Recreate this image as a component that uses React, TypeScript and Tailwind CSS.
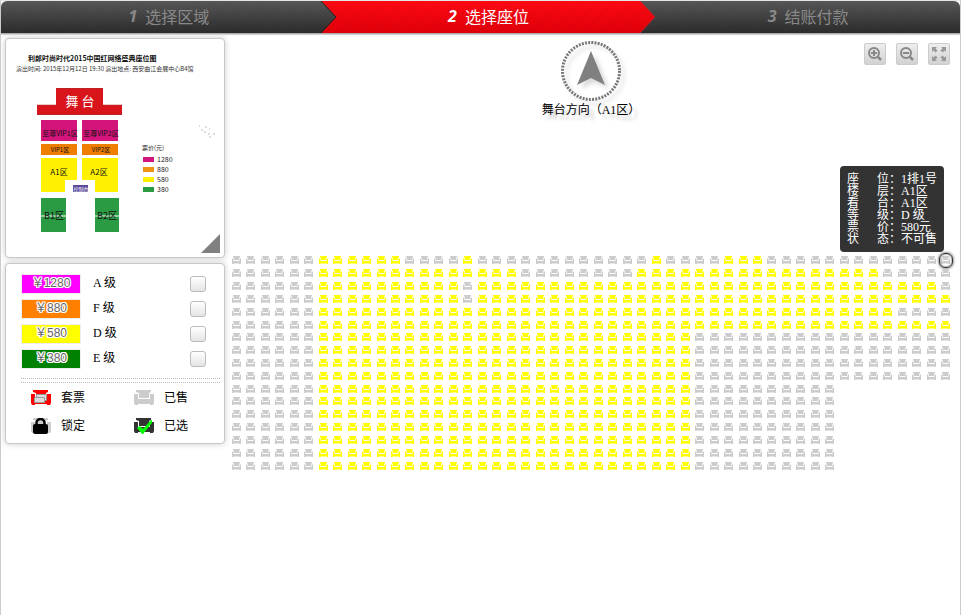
import React from "react";

const TOTAL_COLUMNS = 50;

interface RowInfo {
  seats: number;
  open: [number, number][];
}

// Ranges of column indexes that are still for sale, both ends included
const upperRows: RowInfo[] = [
  { seats: 50, open: [[6, 11], [16, 16], [29, 29], [34, 36]] },
  { seats: 50, open: [[6, 19], [28, 44]] },
  { seats: 50, open: [[6, 15], [17, 48]] },
  { seats: 50, open: [[6, 15], [17, 49]] },
  { seats: 50, open: [[6, 45]] },
  { seats: 50, open: [[6, 49]] },
];

const rows: RowInfo[] = [
  ...upperRows,
  ...Array.from({ length: 4 }, (): RowInfo => ({ seats: 50, open: [[6, 31]] })),
  ...Array.from({ length: 7 }, (): RowInfo => ({ seats: 42, open: [[6, 31]] })),
];

const prices = [
  { price: "￥1280", level: "A 级", color: "bg-[#ff00ff]" },
  { price: "￥880", level: "F 级", color: "bg-[#ff8000]" },
  { price: "￥580", level: "D 级", color: "bg-[#ffff00]" },
  { price: "￥380", level: "E 级", color: "bg-[#008000]" },
];

const seatInfo = [
  ["座", "位：", "1排1号"],
  ["楼", "层：", "A1区"],
  ["看", "台：", "A1区"],
  ["等", "级：", "D 级"],
  ["票", "价：", "580元"],
  ["状", "态：", "不可售"],
];

const CHAIR = "M2 0h15v2l-2 1v5H5V3L2 2zM0 4h4v5h12V4h4v9l-1 2h-3v-1H4v1H1l-1-2z";

interface StepProps {
  number: number;
  title: string;
  active?: boolean;
  arrow?: "dark" | "red";
}

const Step: React.FC<StepProps> = ({ number, title, active, arrow }) => (
  <li
    aria-current={active ? "step" : undefined}
    className={`relative flex flex-1 items-center justify-center gap-2 pb-0.5 pl-4 ${
      active
        ? "bg-linear-to-b from-[#ff0a12] to-[#e2000a] text-white"
        : "bg-linear-to-b from-[#585858] to-[#2c2c2c] text-[#8b8b8b]"
    }`}
  >
    <span className="font-['Open_Sans',sans-serif] text-base font-bold italic">{number}</span>
    <span className="text-base">{title}</span>
    {arrow && (
      <svg className="absolute top-0 left-full z-10 h-full w-4" viewBox="0 0 16 32" preserveAspectRatio="none">
        <defs>
          <linearGradient id={`arrow-${arrow}`} x1="0" y1="0" x2="0" y2="1">
            <stop offset="0" stopColor={arrow === "red" ? "#ff0a12" : "#585858"} />
            <stop offset="1" stopColor={arrow === "red" ? "#e2000a" : "#2c2c2c"} />
          </linearGradient>
        </defs>
        <path d="M-1 0H0L15 16 0 32h-1z" fill={`url(#arrow-${arrow})`} />
        <path d="M0 0L15 16 0 32" fill="none" stroke={arrow === "red" ? "#b9272b" : "#222"} strokeWidth="1" />
      </svg>
    )}
  </li>
);

const VenueMap: React.FC = () => (
  <svg viewBox="0 0 218 218" className="block w-full" role="img" aria-label="座位图" fontFamily="'Noto Sans CJK SC', sans-serif">
    <text x="22" y="22" fontSize="7" fontWeight="bold" fill="#111">利郎时尚时代2015中国红网络盛典座位图</text>
    <text x="10" y="32" fontSize="6" fill="#333">演出时间: 2015年12月12日 19:30 演出地点: 西安曲江会展中心B4馆</text>

    <path d="M50 49h47v17h19v10H31V66h19z" fill="#d7151a" />
    <path d="M31 66h19M97 66h19M50 49.500h47M31 75.500h85" stroke="#a83030" strokeWidth="1" opacity=".5" />
    <text x="74" y="67" fontSize="13" fill="#fff" textAnchor="middle">舞 台</text>

    <path d="M35 81h36v21H35zM76 81h36v21H76z" fill="#d3147a" />
    <path d="M35 105h36v11H35zM76 105h36v11H76z" fill="#ef7d00" />
    <path d="M35 119h36v22H59v12H35zM76 119h36v34H89v-12H76z" fill="#fff100" />
    <path d="M67 146h15v7H67z" fill="#5b4a9a" />
    <path d="M35 159h25v34H35zM89 159h24v34H89z" fill="#2a9a43" />
    <path d="M35 177h25M89 177h24" stroke="#fff" strokeWidth="1" />

    <g fill="#111" textAnchor="middle">
      <text x="54" y="97" fontSize="7">至尊VIP1区</text>
      <text x="95" y="97" fontSize="7">至尊VIP2区</text>
      <text x="54" y="113" fontSize="6">VIP1区</text>
      <text x="95" y="113" fontSize="6">VIP2区</text>
      <text x="53" y="136" fontSize="8">A1区</text>
      <text x="93" y="136" fontSize="8">A2区</text>
      <text x="48" y="180" fontSize="9">B1区</text>
      <text x="101" y="180" fontSize="9">B2区</text>
    </g>
    <text x="75" y="152" fontSize="5" fill="#fff" textAnchor="middle">控制台</text>

    <path d="M137 118h11v5h-11z" fill="#d3147a" />
    <path d="M137 128h11v5h-11z" fill="#ee9412" />
    <path d="M137 138h11v5h-11z" fill="#fff100" />
    <path d="M137 148h11v5h-11z" fill="#2a9a43" />
    <g fill="#222" fontSize="7">
      <text x="136" y="111" fontSize="6">票价(元)</text>
      <text x="151" y="123">1280</text>
      <text x="151" y="133">880</text>
      <text x="151" y="143">580</text>
      <text x="151" y="153">380</text>
    </g>

    <path d="M193 87h1M195 91h2M199 88h2M203 90h1M198 93h2M202 95h2M207 95h2M203 98h2" stroke="#bbb" strokeWidth="1" />
    <path d="M214 195v19h-19z" fill="#808080" />
  </svg>
);

interface SeatProps {
  open: boolean;
  label: string;
  current?: boolean;
}

const Seat: React.FC<SeatProps> = ({ open, label, current }) => (
  <button
    type="button"
    aria-label={label}
    className={`relative flex items-center justify-center ${open ? "text-[#ffff00]" : "text-[#cccccc]"}`}
  >
    {current && (
      <span className="absolute -inset-y-px inset-x-0 rounded-md border border-[#333] shadow-[0_0_3px_#333,inset_0_0_2px_#333]" />
    )}
    <svg viewBox="0 0 9 8" className="h-2 w-[9px] shrink-0" fill="currentColor">
      <path d="M1 0h7v1.500H7V4H2V1.500H1zM0 2.500h1.500v2.500h6V2.500H9V8H7.500V7.500h-6V8H0z" />
    </svg>
  </button>
);

const SeatTooltip: React.FC = () => (
  <dl
    role="tooltip"
    className="absolute right-[9px] bottom-full mb-0.5 w-[104px] rounded-sm bg-[#333] px-[7px] py-[7px] text-xs leading-3 text-white"
  >
    {seatInfo.map(([first, second, value]) => (
      <div key={first} className="flex whitespace-nowrap">
        <dt className="flex w-[54px] shrink-0 justify-between">
          <span>{first}</span>
          <span>{second}</span>
        </dt>
        <dd>{value}</dd>
      </div>
    ))}
  </dl>
);

const ToolButton: React.FC<{ label: string; children: React.ReactNode }> = ({ label, children }) => (
  <button
    type="button"
    aria-label={label}
    className="flex size-[22px] items-center justify-center rounded-xs border border-[#ccc] bg-linear-to-b from-[#eee] to-[#d2d2d2]"
  >
    <svg viewBox="0 0 16 16" className="size-4 shrink-0">{children}</svg>
  </button>
);

const LegendItem: React.FC<{ text: string; children: React.ReactNode }> = ({ text, children }) => (
  <li className="flex items-center gap-2.5">
    <svg viewBox="0 0 20 16" className="h-4 w-5">{children}</svg>
    <span>{text}</span>
  </li>
);

export default function App() {
  return (
    <div className="min-h-screen border-x border-[#ccc] border-t border-t-[#e3e7e6] bg-white font-['Liberation_Serif','Noto_Sans_CJK_SC',sans-serif] text-xs text-black">
      <header className="relative overflow-hidden rounded-t-md border-b border-[#aaa] font-['Noto_Sans_CJK_SC',sans-serif] shadow-[0_1px_1px_#ccc]">
        <ol className="flex h-8">
          <Step number={1} title="选择区域" arrow="dark" />
          <Step number={2} title="选择座位" active arrow="red" />
          <Step number={3} title="结账付款" />
        </ol>
        <div className="pointer-events-none absolute inset-0 z-20 bg-[repeating-linear-gradient(135deg,transparent_0px,transparent_2px,rgba(0,0,0,0.05)_2px,rgba(0,0,0,0.05)_3px)]" />
      </header>

      <div className="flex items-start">
        <aside className="ml-1 flex w-[220px] shrink-0 flex-col gap-[5px] pt-1">
          <section className="rounded-sm border border-[#c8c8c8] bg-white shadow-[0_0_6px_#ccc]">
            <VenueMap />
          </section>

          <section className="rounded-sm border border-[#c8c8c8] bg-white pt-2.5 pr-1 pb-1 pl-[15px] shadow-[0_0_6px_#ccc]">
            <ul>
              {prices.map((item) => (
                <li key={item.level}>
                  <label className="flex h-[25px] items-start">
                    <span
                      className={`${item.color} h-5 w-[60px] border border-[#eee] text-center font-['Liberation_Sans','Noto_Sans_CJK_SC',sans-serif] leading-4 text-[#666] [text-shadow:1px_0_#fff,-1px_0_#fff,0_1px_#fff,0_-1px_#fff,1px_1px_#fff,-1px_-1px_#fff,1px_-1px_#fff,-1px_1px_#fff]`}
                    >
                      {item.price}
                    </span>
                    <span className="ml-3 flex-1 leading-[18px]">{item.level}</span>
                    <input
                      type="checkbox"
                      className="mt-0.5 mr-3.5 size-4 appearance-none rounded-[3px] border border-[#bbb] bg-linear-to-b from-white to-[#e4e4e4] checked:bg-[#999]"
                    />
                  </label>
                </li>
              ))}
            </ul>

            <div className="mt-1 h-[5px] border-y border-dotted border-[#bbb]" />

            <ul className="grid grid-cols-[103px_1fr] gap-y-3 pt-[7px] pb-[5px] pl-2.5 leading-4">
              <LegendItem text="套票">
                <path d={CHAIR} fill="#ff0000" />
                <path d="M5.500 4.500h10v6h-10z" fill="#ddd" stroke="#999" />
                <path d="M3.500 7.500h10v5h-10z" fill="#ddd" stroke="#999" />
              </LegendItem>
              <LegendItem text="已售">
                <path d={CHAIR} fill="#ccc" />
              </LegendItem>
              <LegendItem text="锁定">
                <path d={CHAIR} fill="#ccc" />
                <path d="M5.500 8V5a4 4 0 0 1 8 0v3" fill="none" stroke="#000" strokeWidth="2.500" />
                <rect x="2" y="6" width="15" height="10" rx="2" fill="#000" />
              </LegendItem>
              <LegendItem text="已选">
                <path d={CHAIR} fill="#333" />
                <path d="M3 10l3-2 3 3 7-8 2-1v3L9 16H8z" fill="#00ff00" />
              </LegendItem>
            </ul>
          </section>
        </aside>

        <main className="min-w-0 flex-1 pr-[7px] pl-1">
          <div className="grid min-h-[220px] grid-cols-3 items-start">
            <div className="col-start-2 flex flex-col items-center pt-1.5">
              <svg viewBox="0 0 64 62" className="h-[62px] w-16 drop-shadow-[4px_4px_2px_rgba(0,0,0,0.15)]">
                <circle cx="32" cy="31" r="28.500" fill="none" stroke="#777" strokeWidth="3" strokeDasharray="2 1.200" />
                <path d="M32 11l14 34-14-7-14 7z" fill="#808080" />
              </svg>
              <p className="leading-4 whitespace-nowrap [text-shadow:5px_5px_3px_#ccc]">舞台方向（A1区）</p>
            </div>
            <div className="flex justify-end gap-2.5 pt-[9px] pr-[3px]">
              <ToolButton label="放大">
                <circle cx="7" cy="7" r="5" fill="none" stroke="#888" strokeWidth="2" />
                <path d="M4 7h6M7 4v6" stroke="#888" strokeWidth="2" />
                <path d="M11 11l3 3" stroke="#888" strokeWidth="2.500" />
              </ToolButton>
              <ToolButton label="缩小">
                <circle cx="7" cy="7" r="5" fill="none" stroke="#888" strokeWidth="2" />
                <path d="M4 7h6" stroke="#888" strokeWidth="2" />
                <path d="M11 11l3 3" stroke="#888" strokeWidth="2.500" />
              </ToolButton>
              <ToolButton label="全屏">
                <path d="M1 1h5L4.500 2.500l2 2-2 2-2-2L1 6zM15 1v5l-1.500-1.500-2 2-2-2 2-2L10 1zM1 15v-5l1.500 1.500 2-2 2 2-2 2L6 15zM15 15h-5l1.500-1.500-2-2 2-2 2 2L15 10z" fill="#999" />
              </ToolButton>
            </div>
          </div>

          <div className="relative grid h-[218px] grid-cols-[repeat(50,minmax(0,1fr))] grid-rows-[repeat(17,minmax(0,1fr))]">
            {rows.map((row, r) => (
              <React.Fragment key={r}>
                {Array.from({ length: row.seats }, (_, c) => (
                  <Seat
                    key={c}
                    open={row.open.some(([from, to]) => c >= from && c <= to)}
                    label={`${r + 1}排${TOTAL_COLUMNS - c}号`}
                    current={r === 0 && c === TOTAL_COLUMNS - 1}
                  />
                ))}
                {row.seats < TOTAL_COLUMNS && <span className="col-span-8" />}
              </React.Fragment>
            ))}
            <SeatTooltip />
          </div>
        </main>
      </div>
    </div>
  );
}
